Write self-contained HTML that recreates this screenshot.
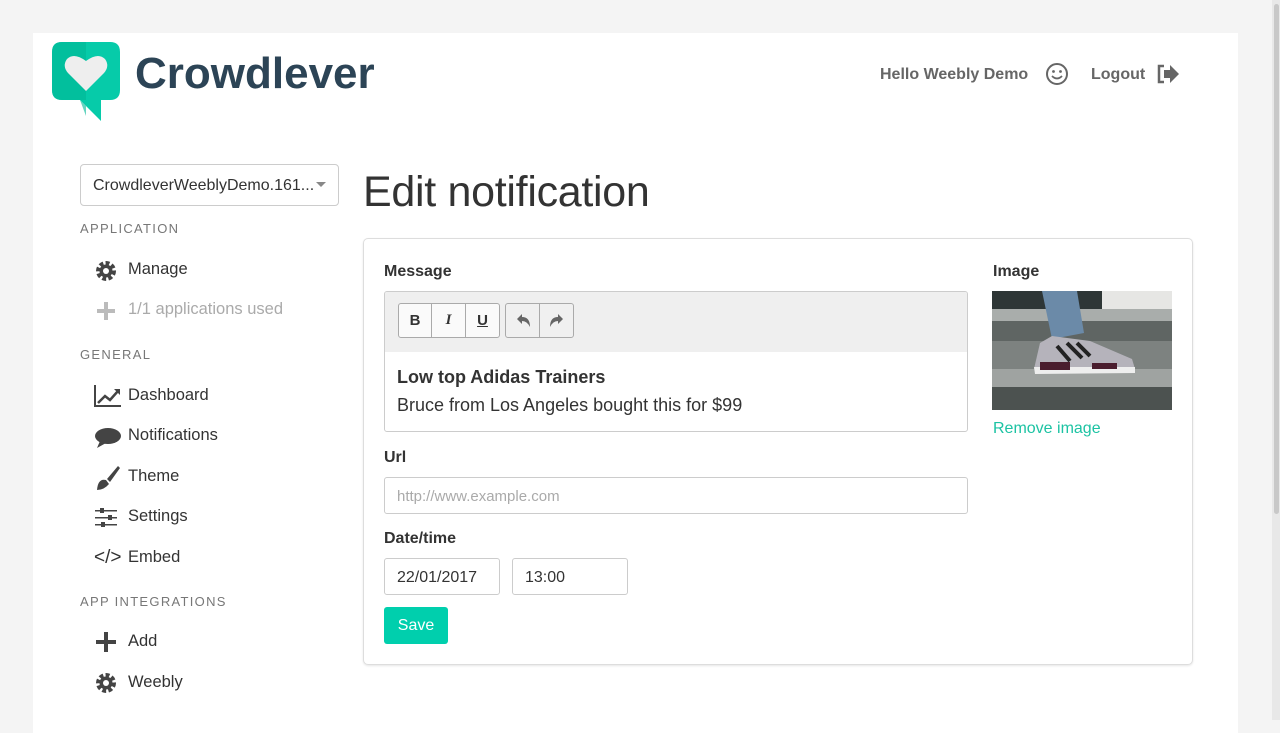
<!DOCTYPE html>
<html><head><style>
*{box-sizing:border-box;margin:0;padding:0}
body{width:1280px;height:720px;overflow:hidden;background:#f4f4f4;font-family:"Liberation Sans",sans-serif;color:#333;position:relative}
.wrap{position:absolute;left:33px;top:33px;width:1205px;height:700px;background:#fff}
.abs{position:absolute}
.scroll{position:absolute;left:1272px;top:0;width:8px;height:720px;background:#e8e8e8}
.scroll div{position:absolute;left:2px;top:4px;width:5px;height:510px;background:#c8c8c8;border-radius:3px}
.sec{position:absolute;left:80px;font-size:13px;letter-spacing:1.3px;color:#777}
.item{position:absolute;left:128px;font-size:16.5px;color:#333}
.ic{position:absolute;left:94px}
.lbl{position:absolute;font-weight:bold;font-size:16px;color:#333}
.inp{position:absolute;border:1px solid #ccc;border-radius:3px;height:37px;font-size:16px;padding:10px 12px;color:#333}
</style></head><body>
<div class="wrap"></div>
<div class="scroll"><div></div></div>

<svg class="abs" style="left:52px;top:42px" width="70" height="82" viewBox="0 0 70 82">
<path d="M10 0H58Q68 0 68 10V48Q68 58 58 58H49V79L28 58H10Q0 58 0 48V10Q0 0 10 0Z" fill="#06cba9"/>
<path d="M0 10Q0 0 10 0H34V58H28L34 64V74L28 58H10Q0 58 0 48Z" fill="#00b896" opacity=".6"/>
<path d="M34 49L16 31Q10 24 15 17Q22 10 34 19Q46 10 53 17Q58 24 52 31Z" fill="#eeeeee"/>
</svg>
<div class="abs" style="left:135px;top:49px;font-size:44px;font-weight:bold;color:#2c4456;letter-spacing:0">Crowdlever</div>

<div class="abs" style="left:880px;top:66px;font-size:16px;font-weight:bold;color:#666">Hello Weebly Demo</div>
<svg class="abs" style="left:1045px;top:62px" width="24" height="24" viewBox="0 0 24 24"><circle cx="12" cy="12" r="10" fill="none" stroke="#666" stroke-width="2"/><circle cx="8.5" cy="9.5" r="1.4" fill="#666"/><circle cx="15.5" cy="9.5" r="1.4" fill="#666"/><path d="M7 14Q12 19 17 14" fill="none" stroke="#666" stroke-width="1.8"/></svg>
<div class="abs" style="left:1091px;top:66px;font-size:16px;font-weight:bold;color:#666">Logout</div>
<svg class="abs" style="left:1156px;top:64px" width="24" height="20" viewBox="0 0 24 20"><path d="M8 2H3V18H8" fill="none" stroke="#666" stroke-width="2.5"/><path d="M8 6H14V1L23 10L14 19V14H8Z" fill="#666"/></svg>

<div class="abs" style="left:80px;top:164px;width:259px;height:42px;border:1px solid #ccc;border-radius:4px;font-size:16px;padding:12px 12px;color:#333;white-space:nowrap;overflow:hidden">CrowdleverWeeblyDemo.161...</div>
<div class="abs" style="left:316px;top:182px;border:5px solid transparent;border-top-color:#888;border-bottom:0"></div>

<div class="sec" style="top:221px">APPLICATION</div>
<svg class="ic" style="top:259px" width="24" height="24" viewBox="0 0 24 24"><circle cx="12" cy="12" r="7" fill="none" stroke="#444" stroke-width="6" stroke-dasharray="3.4 2"/><circle cx="12" cy="12" r="6.5" fill="#444"/><circle cx="12" cy="12" r="3" fill="#fff"/></svg>
<div class="item" style="top:260px">Manage</div>
<svg class="ic" style="top:300px" width="24" height="22"><path d="M10 2H14V9H21V13H14V20H10V13H3V9H10Z" fill="#bbb"/></svg>
<div class="item" style="top:300px;color:#aaa">1/1 applications used</div>

<div class="sec" style="top:347px">GENERAL</div>
<svg class="ic" style="top:384px;left:93px" width="30" height="24"><path d="M2 1V22H28" fill="none" stroke="#444" stroke-width="2"/><path d="M5 19L12 12L17 16L25 7" fill="none" stroke="#444" stroke-width="2.5"/><path d="M21 5H27V11Z" fill="#444"/></svg>
<div class="item" style="top:386px">Dashboard</div>
<svg class="ic" style="top:426px" width="28" height="24"><ellipse cx="14" cy="10" rx="13" ry="8" fill="#444"/><path d="M3 22L6 15L12 17Z" fill="#444"/></svg>
<div class="item" style="top:426px">Notifications</div>
<svg class="ic" style="top:464px" width="28" height="28"><path d="M24 2L13 15L16 18L26 4Z" fill="#444"/><path d="M12 16Q4 14 3 26Q10 26 15 20Z" fill="#444"/></svg>
<div class="item" style="top:467px">Theme</div>
<svg class="ic" style="top:507px" width="26" height="22" fill="#444"><rect x="1" y="3" width="22" height="1.5"/><rect x="1" y="10" width="22" height="1.5"/><rect x="1" y="17" width="22" height="1.5"/><rect x="6" y="1" width="4" height="5"/><rect x="14" y="8" width="4" height="5"/><rect x="7" y="15" width="4" height="5"/></svg>
<div class="item" style="top:507px">Settings</div>
<div class="abs" style="left:94px;top:547px;font-size:19px;color:#333">&lt;/&gt;</div>
<div class="item" style="top:548px">Embed</div>

<div class="sec" style="top:594px">APP INTEGRATIONS</div>
<svg class="ic" style="top:631px" width="24" height="22"><path d="M10 1H14V9H22V13H14V21H10V13H2V9H10Z" fill="#444"/></svg>
<div class="item" style="top:632px">Add</div>
<svg class="ic" style="top:671px" width="24" height="24" viewBox="0 0 24 24"><circle cx="12" cy="12" r="7" fill="none" stroke="#444" stroke-width="6" stroke-dasharray="3.4 2"/><circle cx="12" cy="12" r="6.5" fill="#444"/><circle cx="12" cy="12" r="3" fill="#fff"/></svg>
<div class="item" style="top:673px">Weebly</div>

<div class="abs" style="left:363px;top:168px;font-size:43px;color:#333;letter-spacing:-0.3px">Edit notification</div>

<div class="abs" style="left:363px;top:238px;width:830px;height:427px;border:1px solid #ddd;border-radius:5px;box-shadow:0 1px 2px rgba(0,0,0,.1)"></div>
<div class="lbl" style="left:384px;top:263px">Message</div>
<div class="abs" style="left:384px;top:291px;width:584px;height:141px;border:1px solid #ccc;border-radius:3px;overflow:hidden">
 <div style="height:60px;background:#efefef"></div>
 <div style="padding:11px 12px;font-size:18px;line-height:28px;color:#333"><b>Low top Adidas Trainers</b><br>Bruce from Los Angeles bought this for $99</div>
</div>
<div class="abs" style="left:398px;top:303px;display:flex;border:1px solid #aaa;border-radius:3px;background:#fafafa">
 <div style="width:33px;height:33px;text-align:center;line-height:33px;font-weight:bold;font-size:15px;border-right:1px solid #aaa">B</div>
 <div style="width:34px;height:33px;text-align:center;line-height:33px;font-weight:bold;font-style:italic;font-size:15px;border-right:1px solid #aaa;font-family:'Liberation Serif'">I</div>
 <div style="width:33px;height:33px;text-align:center;line-height:33px;font-weight:bold;font-size:15px;text-decoration:underline">U</div>
</div>
<div class="abs" style="left:505px;top:303px;display:flex;border:1px solid #aaa;border-radius:3px;background:#f0f0f0">
 <div style="width:34px;height:33px;border-right:1px solid #aaa"><svg width="34" height="33"><path d="M11 15L16 10V13Q24 13 24 23Q21 17 16 17V20Z" fill="#666"/></svg></div>
 <div style="width:33px;height:33px"><svg width="33" height="33"><path d="M23 15L18 10V13Q10 13 10 23Q13 17 18 17V20Z" fill="#666"/></svg></div>
</div>

<div class="lbl" style="left:993px;top:263px">Image</div>
<svg class="abs" style="left:992px;top:291px" width="180" height="119" viewBox="0 0 180 119">
<rect width="180" height="119" fill="#8a8e8c"/>
<rect width="180" height="18" fill="#2e3636"/><rect x="110" width="70" height="18" fill="#e6e6e4"/>
<rect y="18" width="180" height="12" fill="#a9adab"/>
<rect y="30" width="180" height="20" fill="#5f6563"/>
<rect y="50" width="180" height="28" fill="#7d8280"/>
<rect y="78" width="180" height="18" fill="#9fa3a1"/>
<rect y="96" width="180" height="23" fill="#4c5250"/>
<path d="M50 0H85L92 42L60 48Z" fill="#6b8aa8"/>
<path d="M48 52L60 45L98 50L140 68L143 78L60 82L42 78Z" fill="#b5b3bb"/>
<path d="M42 76L143 76L143 82L43 83Z" fill="#eee"/>
<rect x="48" y="71" width="30" height="8" fill="#4a1d2e"/><rect x="100" y="72" width="25" height="6" fill="#4a1d2e"/>
<path d="M65 55L78 70M75 52L90 67M85 52L98 65" stroke="#222" stroke-width="4"/>
</svg>
<div class="abs" style="left:993px;top:420px;font-size:16px;color:#1cc3a3">Remove image</div>

<div class="lbl" style="left:384px;top:449px">Url</div>
<div class="inp" style="left:384px;top:477px;width:584px;color:#aaa;font-size:15px">http://www.example.com</div>
<div class="lbl" style="left:384px;top:530px">Date/time</div>
<div class="inp" style="left:384px;top:558px;width:116px">22/01/2017</div>
<div class="inp" style="left:512px;top:558px;width:116px">13:00</div>
<div class="abs" style="left:384px;top:607px;width:64px;height:37px;background:#00cfad;border-radius:3px;color:#fff;font-size:16px;text-align:center;line-height:38px">Save</div>
</body></html>
